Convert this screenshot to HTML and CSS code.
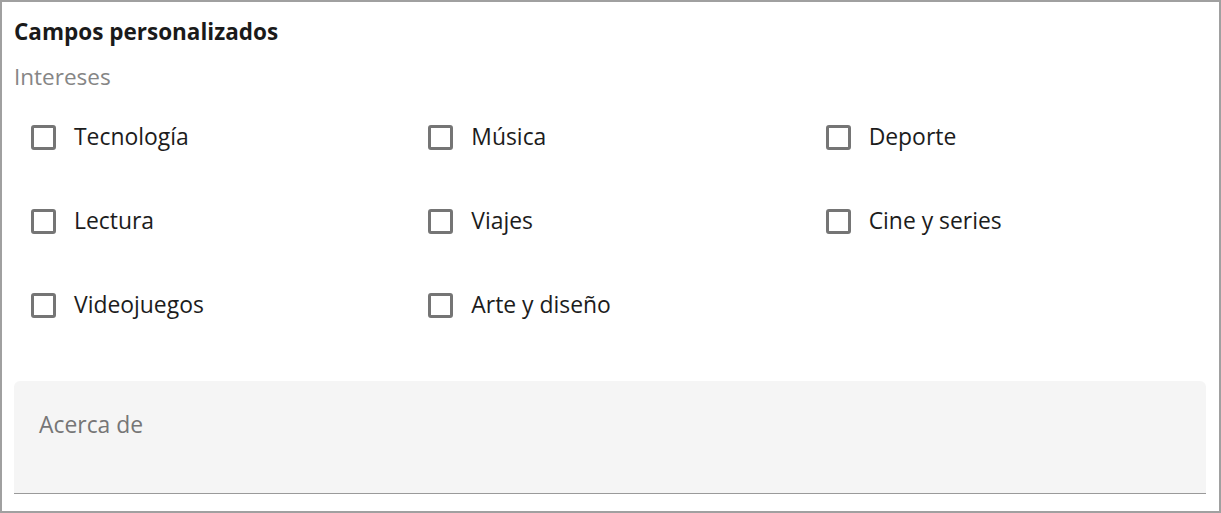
FILE: index.html
```html
<!DOCTYPE html>
<html lang="es">
<head>
<meta charset="utf-8">
<title>Campos personalizados</title>
<link rel="stylesheet" href="styles.css">
</head>
<body>
<div class="frame">
  <h2 class="title">Campos personalizados</h2>
  <div class="group-label">Intereses</div>
  <div class="options">
    <label class="option"><span class="box"></span><span class="text">Tecnología</span></label>
    <label class="option"><span class="box"></span><span class="text">Música</span></label>
    <label class="option"><span class="box"></span><span class="text">Deporte</span></label>
    <label class="option"><span class="box"></span><span class="text">Lectura</span></label>
    <label class="option"><span class="box"></span><span class="text">Viajes</span></label>
    <label class="option"><span class="box"></span><span class="text">Cine y series</span></label>
    <label class="option"><span class="box"></span><span class="text">Videojuegos</span></label>
    <label class="option"><span class="box"></span><span class="text">Arte y diseño</span></label>
  </div>
  <div class="textarea">
    <span class="placeholder">Acerca de</span>
  </div>
</div>
</body>
</html>
```
FILE: styles.css
```css
html, body {
  margin: 0;
  padding: 0;
  background: #ffffff;
}
body {
  font-family: "Open Sans", "Noto Sans", sans-serif;
  color: #1f1f1f;
}
.frame {
  box-sizing: border-box;
  width: 1221px;
  height: 513px;
  border: 2px solid #a0a0a0;
  padding: 15px 13px 0 12px;
  display: flex;
  flex-direction: column;
}
.title {
  margin: 0;
  font-size: 22.5px;
  font-weight: 700;
  line-height: 30px;
  color: #1a1a1a;
}
.group-label {
  margin-top: 15px;
  font-size: 22.5px;
  line-height: 30px;
  color: #868686;
}
.options {
  margin-top: 3px;
  display: grid;
  grid-template-columns: repeat(3, 1fr);
  grid-auto-rows: 84px;
}
.option {
  display: flex;
  align-items: center;
  padding-left: 17px;
}
.box {
  box-sizing: border-box;
  width: 25px;
  height: 25px;
  border: 3px solid #757575;
  border-radius: 3px;
  flex: none;
}
.text {
  margin-left: 18px;
  font-size: 22.9px;
  line-height: 30px;
  color: #1c1c1c;
}
.textarea {
  margin-top: 34px;
  height: 113px;
  background: #f5f5f5;
  border-radius: 6px 6px 0 0;
  border-bottom: 1px solid #9a9a9a;
  padding: 29px 25px 0;
  box-sizing: border-box;
}
.placeholder {
  font-size: 22.9px;
  line-height: 30px;
  color: #767676;
}
```
